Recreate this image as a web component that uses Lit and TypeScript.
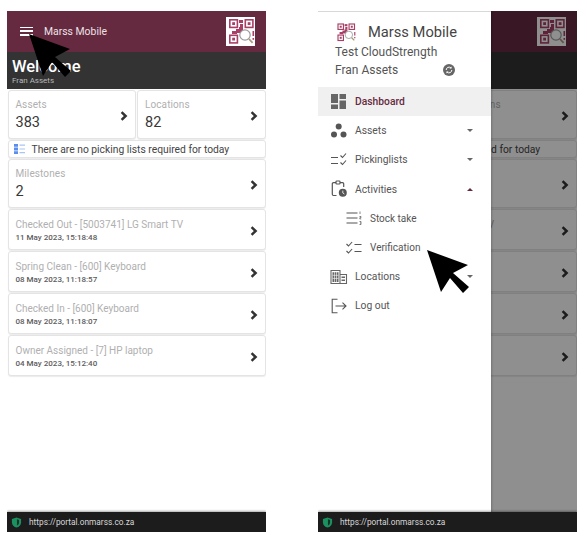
import { LitElement, html, css, svg } from "lit";
import { customElement } from "lit/decorators.js";

const qr = () => html`<svg class="qr" viewBox="0 0 28 28">
  <g fill="none" stroke="#a83f66" stroke-width="1.6">
    <rect x="2.8" y="2.8" width="7.6" height="7.6"/>
    <rect x="18.3" y="2.8" width="7.6" height="7.6"/>
    <rect x="2.8" y="18.3" width="7.6" height="7.6"/>
  </g>
  <g fill="#a83f66">
    <rect x="5.2" y="5.2" width="2.8" height="2.8"/><rect x="20.7" y="5.2" width="2.8" height="2.8"/><rect x="5.2" y="20.7" width="2.8" height="2.8"/>
    <rect x="12" y="3" width="4" height="3"/><rect x="13" y="7" width="3" height="3"/>
    <rect x="9" y="12" width="6" height="4"/><rect x="12" y="10" width="4" height="3"/><rect x="5" y="14" width="5" height="3"/>
    <rect x="25.5" y="14" width="1.6" height="5"/><rect x="25.5" y="21" width="1.6" height="1.8"/>
  </g>
  <circle cx="18" cy="18" r="5.2" fill="#fff" stroke="#9a9a9a" stroke-width="1.2"/>
  <path d="M22 22l3.6 3.8" stroke="#a89a7a" stroke-width="1.8" fill="none"/>
</svg>`;

const chevron = () => html`<svg class="chev" viewBox="0 0 8 10"><path d="M1.6 1.2L5.6 5L1.6 8.8" fill="none" stroke="#333" stroke-width="2.5"/></svg>`;

const cursor = () => html`<svg class="cursor-svg" viewBox="0 0 43 44"><path d="M0 0L41 15L26 23L42 37L36 43L23 28L14 42Z" fill="#000"/></svg>`;

const shield = () => html`<svg class="shield" viewBox="0 0 12 12"><path d="M6 .6L1 2.200v3.400c0 3 2.200 5.200 5 5.900 2.800-.7 5-2.900 5-5.900V2.200z" fill="#1c9160"/><path d="M6.500 2.500L8.800 3.300v2.500c0 1.600-.7 2.800-2.300 3.500z" fill="#12332a"/></svg>`;

const icon = (c: unknown) => html`<svg class="ni" viewBox="0 0 18 18">${c}</svg>`;
const I = {
  dash: svg`<path d="M1 1h7v9H1zM1 11.500h7V16H1zM9.500 1H16v5H9.500zM9.500 7.500H16V16H9.500z" fill="#666"/>`,
  assets: svg`<circle cx="8.700" cy="4.500" r="3" fill="#555"/><circle cx="4" cy="12.500" r="3" fill="#555"/><circle cx="13.500" cy="12.500" r="3" fill="#555"/>`,
  pick: svg`<path d="M1 6.500h7M1 12.500h7" stroke="#555" stroke-width="1.100" fill="none"/><path d="M10.500 4.500l2 2 3.500-4M10.500 11.500l2 2 3.500-4" stroke="#555" stroke-width="1.100" fill="none"/>`,
  act: svg`<path d="M6.500 15.500H3.500a1.200 1.200 0 0 1-1.200-1.200V3.800a1.200 1.200 0 0 1 1.200-1.200H6M10 2.600h2.500a1.200 1.200 0 0 1 1.200 1.200V7" fill="none" stroke="#555" stroke-width="1.200"/><rect x="6" y="1" width="4" height="3" rx=".8" fill="none" stroke="#555" stroke-width="1.200"/><circle cx="12.800" cy="12.800" r="4" fill="#555"/><path d="M12.800 10.600v2.400l1.600 1" stroke="#fff" stroke-width=".8" fill="none"/>`,
  stock: svg`<path d="M1.500 4h11M1.500 9h11M1.500 14h11" stroke="#555" stroke-width="1.200" fill="none"/><path d="M15 2.500v2.500M14.500 7.500h1.500v1.200h-1.200v1.200h1.400M14.500 12.500h1.500v3h-1.500M15 14h1" stroke="#555" stroke-width=".7" fill="none"/>`,
  verif: svg`<path d="M1.500 5l2 2 3.600-4M1.500 12l2 2 3.600-4" stroke="#555" stroke-width="1.100" fill="none"/><path d="M9.500 5.500h7M9.500 12.500h7" stroke="#555" stroke-width="1.100" fill="none"/>`,
  loc: svg`<path d="M1 2.500h9v13H1zM10 6.500h6.500v9H10" fill="none" stroke="#666" stroke-width="1.100"/><path d="M2.500 4.200h6v9.800h-6zM11.500 8.500h3.500v1.500h-3.500zM11.500 11.500h3.500v1.500h-3.500z" fill="#666"/><path d="M4.500 4v10M6.500 4v10M2.500 7.300h6M2.500 10.400h6" stroke="#fff" stroke-width=".6"/>`,
  out: svg`<path d="M7.500 2.200H2.200v13.600h5.300" fill="none" stroke="#555" stroke-width="1.100"/><path d="M5.500 9h10.500M12.500 5.700L16 9l-3.500 3.300" fill="none" stroke="#555" stroke-width="1.100"/>`,
};

const rows = [
  ["Checked Out - [5003741] LG Smart TV", "11 May 2023, 15:18:48"],
  ["Spring Clean - [600] Keyboard", "08 May 2023, 11:18:57"],
  ["Checked In - [600] Keyboard", "08 May 2023, 11:18:07"],
  ["Owner Assigned - [7] HP laptop", "04 May 2023, 15:12:40"],
];

const nav = [
  { i: I.dash, t: "Dashboard", active: true },
  { i: I.assets, t: "Assets", caret: "down" },
  { i: I.pick, t: "Pickinglists", caret: "down" },
  { i: I.act, t: "Activities", caret: "up" },
  { i: I.stock, t: "Stock take", sub: true },
  { i: I.verif, t: "Verification", sub: true },
  { i: I.loc, t: "Locations", caret: "down" },
  { i: I.out, t: "Log out" },
];

@customElement("app-root")
export class AppRoot extends LitElement {
  static styles = css`
    :host { display: block; width: 587px; height: 542px; background: #fff; font-family: Roboto, "Liberation Sans", sans-serif; overflow: hidden; }
    .page { display: flex; gap: 52px; padding: 11px 0 0 7px; }
    .phone { position: relative; width: 259px; height: 521px; display: flex; flex-direction: column; background: #fff; overflow: hidden; }
    .top { height: 41px; flex: none; background: #662a40; display: flex; align-items: center; padding: 0 11px 0 13px; color: #ece2e6; font-size: 10.400px; box-sizing: border-box; }
    .burger { width: 13px; height: 9px; display: flex; flex-direction: column; justify-content: space-between; margin-right: 11px; margin-top: -1px; }
    .burger i { display: block; height: 1.500px; background: #fff; }
    .top .name { flex: 1; margin-top: -1px; }
    .qrbox { width: 29px; height: 29px; background: #fff; display: flex; align-items: center; justify-content: center; margin-top: -1px; }
    .qr { width: 28px; height: 28px; display: block; }
    .band { height: 37px; flex: none; background: #333; padding: 6px 0 0 5px; box-sizing: border-box; color: #fff; }
    .band h1 { margin: 0; font-size: 16.500px; line-height: 18px; font-weight: 500; }
    .band p { margin: 0; font-size: 8px; line-height: 9px; color: #b8b8b8; }
    .content { flex: 1; padding: 1px 0.500px 0; display: flex; flex-direction: column; gap: 1px; }
    .card { border: 1px solid #e4e4e4; border-radius: 3px; background: #fff; display: flex; align-items: center; box-sizing: border-box; padding: 0 7px 0 7px; box-shadow: 0 1px 1px rgba(0,0,0,.08); min-width: 0; }
    .two { display: flex; gap: 1px; }
    .two .card { flex: 1; }
    .stat { height: 49px; }
    .stat .body, .row .body { flex: 1; min-width: 0; }
    .stat .body { padding-top: 2px; }
    .row .body { padding-top: 1px; }
    .label { font-size: 10px; line-height: 13px; color: #b0b0b0; letter-spacing: .1px; }
    .row .label { letter-spacing: 0; }
    .num { font-size: 14.500px; line-height: 20px; color: #383838; margin-top: 2px; }
    .chev { width: 8px; height: 10px; flex: none; margin-top: 2px; }
    .notice { height: 18px; font-size: 10.300px; color: #444; padding-left: 5px; gap: 6px; }
    .nicon { width: 12px; height: 10px; flex: none; display: block; }
    .row { height: 41px; }
    .date { font-size: 8px; line-height: 10px; font-weight: 500; color: #5c5c5c; margin-top: 2px; }
    .foot { position: relative; z-index: 3; height: 20px; flex: none; background: #1c1c1c; display: flex; align-items: center; padding-left: 4px; color: #d8d8d8; font-size: 8.300px; gap: 7px; box-shadow: 0 -1px 2px rgba(0,0,0,.35); }
    .shield { width: 11px; height: 11px; display: block; }
    .scrim { position: absolute; inset: 0; background: rgba(0,0,0,.44); z-index: 1; }
    .drawer { position: absolute; left: 0; top: 0; bottom: 0; width: 173px; background: #fff; z-index: 2; border-top: 1px solid #d8d8d8; box-sizing: border-box; box-shadow: 1px 0 2px rgba(0,0,0,.2); }
    .dhead { height: 75px; padding: 10px 0 0 17px; box-sizing: border-box; color: #555; font-size: 12px; }
    .brand { display: flex; align-items: center; gap: 12px; height: 20px; font-size: 14.700px; color: #444; }
    .brand .qr { width: 20px; height: 20px; margin-left: 1px; }
    .dline { display: flex; align-items: center; height: 18px; }
    .dline.first { margin-top: 1px; }
    .sync { width: 12px; height: 12px; margin-left: 45px; display: block; flex: none; }
    .item { height: 29.200px; display: flex; align-items: center; padding-left: 12px; font-size: 10.300px; font-weight: 400; color: #555; }
    .item.active { background: #f0f0f0; color: #662a40; font-weight: 500; }
    .item.sub { padding-left: 27px; font-size: 10px; }
    .ni { width: 18px; height: 18px; flex: none; margin-right: 7px; display: block; }
    .item span { flex: 1; }
    .caret { width: 0; height: 0; border-left: 3.500px solid transparent; border-right: 3.500px solid transparent; margin-right: 18px; }
    .caret.down { border-top: 3.500px solid #666; }
    .caret.up { border-bottom: 3.500px solid #662a40; }
    .cursor { position: absolute; z-index: 4; width: 43px; height: 44px; }
    .cursor-svg { width: 43px; height: 44px; display: block; }
    .c1 { left: 22px; top: 23px; }
    .c2 { left: 109px; top: 239px; }
  `;

  private screen() {
    return html`
      <div class="top">
        <div class="burger"><i></i><i></i><i></i></div>
        <div class="name">Marss Mobile</div>
        <div class="qrbox">${qr()}</div>
      </div>
      <div class="band"><h1>Welcome</h1><p>Fran Assets</p></div>
      <div class="content">
        <div class="two">
          <div class="card stat"><div class="body"><div class="label">Assets</div><div class="num">383</div></div>${chevron()}</div>
          <div class="card stat"><div class="body"><div class="label">Locations</div><div class="num">82</div></div>${chevron()}</div>
        </div>
        <div class="card notice">
          <svg class="nicon" viewBox="0 0 12 10"><path d="M0 0h4v2.800H0zM0 3.600h4v2.800H0zM0 7.200h4V10H0z" fill="#5b8def"/><path d="M5.500 .6H11v1.200H5.500zM5.500 4.400H11v1.200H5.500zM5.500 8H11v1.200H5.500z" fill="#a9c4f5"/></svg>
          There are no picking lists required for today
        </div>
        <div class="card stat"><div class="body"><div class="label">Milestones</div><div class="num">2</div></div>${chevron()}</div>
        ${rows.map(r => html`<div class="card row"><div class="body"><div class="label">${r[0]}</div><div class="date">${r[1]}</div></div>${chevron()}</div>`)}
      </div>
      <div class="foot">${shield()}<span>https://portal.onmarss.co.za</span></div>`;
  }

  render() {
    return html`<div class="page">
      <div class="phone">
        ${this.screen()}
        <div class="cursor c1">${cursor()}</div>
      </div>
      <div class="phone">
        ${this.screen()}
        <div class="scrim"></div>
        <div class="drawer">
          <div class="dhead">
            <div class="brand">${qr()}<span>Marss Mobile</span></div>
            <div class="dline first">Test CloudStrength</div>
            <div class="dline"><span>Fran Assets</span><svg class="sync" viewBox="0 0 12 12"><circle cx="6" cy="6" r="6" fill="#666"/><path d="M3.200 6a2.800 2.800 0 0 1 4.800-2M8.800 6a2.800 2.800 0 0 1-4.800 2" fill="none" stroke="#fff" stroke-width="1"/><path d="M8.600 2.400v2.200H6.400M3.400 9.600V7.400h2.200" fill="#fff"/></svg></div>
          </div>
          ${nav.map(n => html`<div class="item ${n.active ? "active" : ""} ${n.sub ? "sub" : ""}">${icon(n.i)}<span>${n.t}</span>${n.caret ? html`<div class="caret ${n.caret}"></div>` : ""}</div>`)}
        </div>
        <div class="cursor c2">${cursor()}</div>
      </div>
    </div>`;
  }
}
